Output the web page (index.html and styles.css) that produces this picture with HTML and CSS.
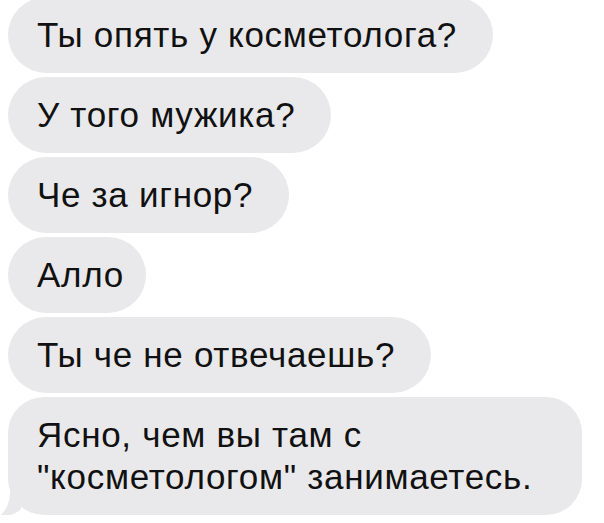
FILE: index.html
```html
<!DOCTYPE html>
<html lang="ru">
<head>
<meta charset="UTF-8">
<meta name="viewport" content="width=device-width, initial-scale=1.0">
<title>Сообщения</title>
<link rel="stylesheet" href="styles.css">
</head>
<body>

<!-- переписка -->
<div class="thread">
  <div class="bubble bubble-ask">Ты опять у косметолога?</div>
  <div class="bubble bubble-ask">У того мужика?</div>
  <div class="bubble bubble-ask">Че за игнор?</div>
  <div class="bubble">Алло</div>
  <div class="bubble bubble-ask">Ты че не отвечаешь?</div>
  <div class="bubble bubble-last">
    Ясно, чем вы там с<br>"косметологом" занимаетесь.
    <svg class="tail" width="26" height="26" viewBox="0 0 26 26">
      <path d="M10 0 C10 12 6 19 0 25 C8 26 16 23 21 18 L21 0 Z" fill="#e9e9eb"/>
    </svg>
  </div>
</div>

</body>
</html>
```

FILE: styles.css
```css
body {
  margin: 0;
  background-color: #fff;
  font-family: 'Liberation Sans', Arial, sans-serif;
  overflow: hidden;
}
.thread {
  display: flex;
  flex-direction: column;
  align-items: flex-start;
  gap: 4px;
  padding-left: 8px;
  margin-top: -3px;
}
.bubble {
  position: relative;
  background-color: #e9e9eb;
  color: #111;
  font-size: 35px;
  line-height: 42px;
  letter-spacing: 0.7px;
  padding: 17px 22px 17px 29px;
  border-radius: 38px;
}
.bubble-ask {
  padding-right: 36px;
}
.bubble-last {
  padding-right: 50px;
  border-radius: 36px;
}
.tail {
  position: absolute;
  left: -8px;
  bottom: -2px;
}
```
